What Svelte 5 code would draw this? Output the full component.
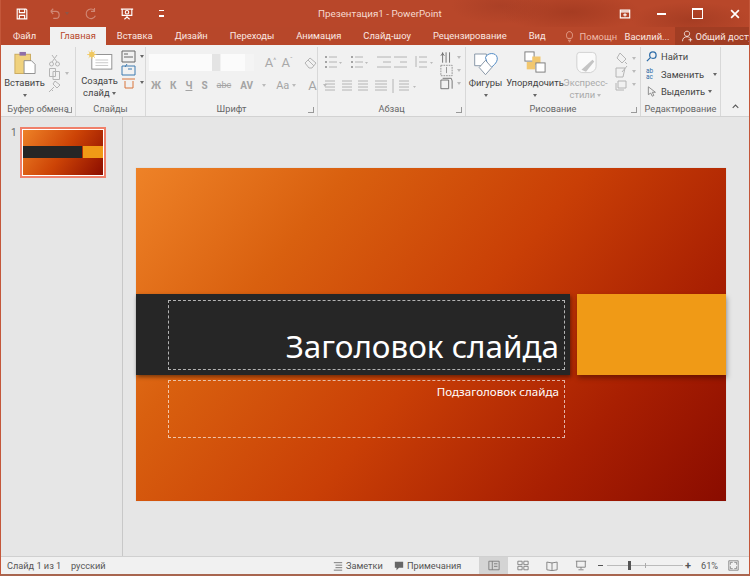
<script lang="ts">
	const tabs = ['Файл', 'Главная', 'Вставка', 'Дизайн', 'Переходы', 'Анимация', 'Слайд-шоу', 'Рецензирование', 'Вид'];
	const fontBtns = ['Ж', 'К', 'Ч', 'S', 'abc', 'AV'];
</script>

{#snippet lines(x: number, y: number, w: number, rows = 3, gap = 5)}
	{#each Array(rows) as _, i}
		<line x1={x} x2={x + w} y1={y + i * gap} y2={y + i * gap} />
	{/each}
{/snippet}

<div class="window">
	<!-- Title bar -->
	<header class="titlebar">
		<div class="qat">
			<svg class="ico16" viewBox="0 0 16 16"><path class="w" d="M2.5 2.5h10l1 1v10h-11zM5 2.5v4h6v-4M5 13.500v-4h6v4" /></svg>
			<svg class="ico16 dim" viewBox="0 0 16 16"><path class="w" d="M3 5l3-3M3 5l3 3M3 5h6c5 0 5 8 0 8H6" /></svg>
			<span class="caret dimc"></span>
			<svg class="ico16 dim redo" viewBox="0 0 16 16"><path class="w" d="M12 4a5.500 5.500 0 1 0 1 6M12 1v4H8" /></svg>
			<svg class="ico16 show" viewBox="0 0 16 16"><path class="w" d="M1 2.500h14M2.500 2.500v7h11v-7M8 9.500v2M5 14l3-2.500 3 2.500" /><circle class="w" cx="8" cy="6" r="2" /></svg>
			<span class="qat-more"></span>
		</div>
		<div class="doc-title">Презентация1 - PowerPoint</div>
		<div class="win-btns">
			<svg class="ico14" viewBox="0 0 14 14"><path class="w" d="M1.500 2.500h11v9h-11zM1.500 4.500h11M7 6v4M5 8h4" /></svg>
			<span class="min"></span>
			<span class="max"></span>
			<svg class="ico14" viewBox="0 0 14 14"><path class="x" d="M2.500 2.500l9 9M11.500 2.500l-9 9" /></svg>
		</div>
	</header>

	<!-- Tabs -->
	<nav class="tabs">
		{#each tabs as tab, i}
			<span class="tab" class:active={i === 1}>{tab}</span>
		{/each}
		<svg class="bulb" viewBox="0 0 12 16"><path d="M3.500 10.500C1 8 1.500 1.500 6 1.500s5 6.500 2.500 9zM4 13h4M5 15h2" /></svg>
		<span class="help">Помощн</span>
		<span class="user">Василий...</span>
		<span class="share">
			<svg viewBox="0 0 16 16"><path d="M8 1.500a3.500 3.500 0 1 1-.01 0zM2 15c0-4 2.500-6 6-6 1.500 0 2.500.4 3.500 1M10 13h5M12.500 10.500v5" /></svg>
			Общий доступ
		</span>
	</nav>

	<!-- Ribbon -->
	<section class="ribbon">
		<div class="group g-clip">
			<div class="g-body">
				<div class="big paste">
					<svg class="ico-paste" viewBox="0 0 24 26">
						<rect x="1" y="4" width="17" height="21" fill="#f0d27e" stroke="#c9a85a" />
						<rect x="6" y="1.500" width="7" height="4" fill="#8f6fa8" />
						<path d="M11 11h8l4 4v10H11z" fill="#fff" stroke="#8a8a8a" />
					</svg>
					<span class="lbl">Вставить</span>
					<span class="caret"></span>
				</div>
				<div class="col small-col">
					<svg class="ico13 off" viewBox="0 0 13 13"><path d="M4 1l5 7M9 1L4 8" /><circle cx="3.500" cy="10" r="2" /><circle cx="9.500" cy="10" r="2" /></svg>
					<span class="row-ico">
						<svg class="ico13 off" viewBox="0 0 13 13"><path d="M1.500 1.500h6v8h-6zM5 4.500h6.500v8H5z" /></svg>
						<span class="caret off-c"></span>
					</span>
					<svg class="ico13 off" viewBox="0 0 13 13"><path d="M7 1l5 4-3 3-4-4zM6 7l-5 5M3 9l2 2" /></svg>
				</div>
			</div>
			<div class="g-label">Буфер обмена <i class="launch"></i></div>
		</div>

		<div class="group g-slides">
			<div class="g-body">
				<div class="big new-slide">
					<svg class="ico-new" viewBox="0 0 28 22">
						<rect x="5" y="5" width="22" height="16" fill="#fff" stroke="#8a8a8a" />
						<path d="M9 11h14M9 14h14M9 17h14" stroke="#c4c4c4" />
						<circle cx="5" cy="5" r="3" fill="#f0c860" />
						<path d="M5 0v10M0 5h10M1.500 1.500l7 7M8.500 1.500l-7 7" stroke="#f0c860" />
					</svg>
					<span class="lbl">Создать</span>
					<span class="lbl">слайд <i class="caret"></i></span>
				</div>
				<div class="col slide-col">
					<span class="row-ico">
						<svg class="ico15" viewBox="0 0 15 13"><path d="M1 1h13v11H1zM3 4h4M3 7h9" /></svg>
						<span class="caret"></span>
					</span>
					<svg class="ico15 blue" viewBox="0 0 15 13"><path d="M1 3h13v9H1zM6 1l-2 3M7 6h4" /></svg>
					<span class="row-ico">
						<svg class="ico15 orange" viewBox="0 0 15 13"><path d="M1 3h13M4 5v7h8V5" /></svg>
						<span class="caret"></span>
					</span>
				</div>
			</div>
			<div class="g-label">Слайды</div>
		</div>

		<div class="group g-font">
			<div class="g-body stack">
				<div class="f-row">
					<span class="f-input wide"></span><span class="f-drop"></span>
					<span class="f-input narrow"></span><span class="f-drop plain"></span>
					<span class="a-btn big-a">A<sup>^</sup></span>
					<span class="a-btn">A<sup>ˇ</sup></span>
					<svg class="ico13 off clear" viewBox="0 0 13 13"><path d="M1 7l5-5 6 5-4 5H5zM4 4l6 6" /></svg>
				</div>
				<div class="f-row tools">
					{#each fontBtns as b}
						<span class="f-btn" class:under={b === 'Ч'} class:strike={b === 'abc'}>{b}</span>
					{/each}
					<i class="caret off-c"></i>
					<span class="f-btn aa">Aa</span><i class="caret off-c"></i>
					<span class="f-sep"></span>
					<span class="f-btn color">A</span><i class="caret off-c"></i>
				</div>
			</div>
			<div class="g-label">Шрифт <i class="launch"></i></div>
		</div>

		<div class="group g-para">
			<div class="g-body para-body">
				<div class="para-left">
					<svg class="ico-list" viewBox="0 0 112 14">
						<g class="gl">
							{@render lines(4, 2, 8)}
							{@render lines(30, 2, 8)}
							<path d="M52 2h14M58 7h8M52 12h14M69 2h13M75 7h7M69 12h13M94 2h8M94 7h8M94 12h8M91 1v11" />
						</g>
						<g class="dots"><path d="M0 2h2M0 7h2M0 12h2M26 2h2M26 7h2M26 12h2" /></g>
						<path class="mini" d="M14 7h3l-1.500 2zM40 7h3l-1.500 2zM105 7h3l-1.500 2z" />
					</svg>
					<svg class="ico-list" viewBox="0 0 112 14">
						<g class="gl">
							{@render lines(0, 2, 10, 4, 3)}
							{@render lines(17, 2, 10, 4, 3)}
							{@render lines(33, 2, 10, 4, 3)}
							{@render lines(50, 2, 12, 4, 3)}
							{@render lines(74, 2, 10, 4, 3)}
							<path d="M68 0v14" />
						</g>
						<path class="mini" d="M88 7h3l-1.500 2z" />
					</svg>
				</div>
				<div class="col para-right">
					<span class="row-ico"><svg class="ico13" viewBox="0 0 15 14"><path d="M3 1v12M7 1v12M11 1v12M1 5l2-3 2 3" /></svg><i class="caret off-c"></i></span>
					<span class="row-ico"><svg class="ico13 bluebox" viewBox="0 0 15 14"><path stroke-dasharray="2 1" d="M1 1h13v12H1z" /><path d="M7.500 3v7" /></svg><i class="caret off-c"></i></span>
					<span class="row-ico"><svg class="ico13" viewBox="0 0 15 14"><path d="M1 3h9v10H1zM3 1h10l1 3v9" /></svg><i class="caret off-c"></i></span>
				</div>
			</div>
			<div class="g-label">Абзац <i class="launch"></i></div>
		</div>

		<div class="group g-draw">
			<div class="g-body">
				<div class="big shapes">
					<svg class="ico-shapes" viewBox="0 0 30 28">
						<path d="M3 4h13v13H3z" fill="#fff" stroke="#7f8fa0" />
						<path d="M15 8c2-6 12-6 13 0 1 6-6 10-9 13z" fill="#fff" stroke="#3f7fbf" />
						<path d="M15 11l7 8-7 8-7-8z" fill="#fff" stroke="#7f8fa0" />
					</svg>
					<span class="lbl">Фигуры</span>
					<span class="caret"></span>
				</div>
				<div class="big arrange">
					<svg class="ico-arr" viewBox="0 0 24 24">
						<rect x="1" y="1" width="10" height="10" fill="#fff" stroke="#777" />
						<rect x="9" y="6" width="9" height="9" fill="#f2c76e" />
						<rect x="3" y="12" width="9" height="8" fill="#f2c76e" />
						<rect x="13" y="13" width="10" height="10" fill="#fff" stroke="#777" />
					</svg>
					<span class="lbl">Упорядочить</span>
					<span class="caret"></span>
				</div>
				<div class="big styles">
					<svg class="ico-sty" viewBox="0 0 24 26"><path d="M5 2h14q4 0 4 4v11q0 5-6 7H7q-5-2-5-7V5q0-3 3-3z" fill="#fafafa" stroke="#cfcfcf" /><path d="M7 21l12-11 2 2-9 11z" fill="#c4c4c4" /></svg>
					<span class="lbl off-t">Экспресс-</span>
					<span class="lbl off-t">стили <i class="caret off-c"></i></span>
				</div>
				<div class="col draw-col">
					<span class="row-ico"><svg class="ico13 off" viewBox="0 0 13 13"><path d="M5 1l6 6-4 4-5-5zM10 10l2 2" /></svg><i class="caret off-c"></i></span>
					<span class="row-ico"><svg class="ico13 off" viewBox="0 0 13 13"><path d="M1 3h9L8 12H1zM12 1L7 7" /></svg><i class="caret off-c"></i></span>
					<span class="row-ico"><svg class="ico13 off" viewBox="0 0 13 13"><path d="M3 3h8v7H3z" /><path d="M1 5v7h8" /></svg><i class="caret off-c"></i></span>
				</div>
			</div>
			<div class="g-label">Рисование <i class="launch"></i></div>
		</div>

		<div class="group g-edit">
			<div class="g-body edit-body">
				<div class="ed-row"><span class="ed-ico"><svg class="ico12" viewBox="0 0 12 12"><circle cx="7.500" cy="4.500" r="3.500" /><path d="M5 7l-4 4" /></svg></span>Найти</div>
				<div class="ed-row"><span class="ed-ico abc">ab<br />ac</span>Заменить<i class="caret gap-c"></i></div>
				<div class="ed-row"><span class="ed-ico"><svg class="ico12 ptr" viewBox="0 0 12 14"><path d="M2 1v10l3-2 2 4 2-1-2-4h4z" /></svg></span>Выделить<i class="caret"></i></div>
			</div>
			<div class="g-label">Редактирование</div>
		</div>

		<div class="collapse"><svg viewBox="0 0 10 6"><path d="M1 5l4-4 4 4" /></svg></div>
	</section>

	<!-- Main area -->
	<main class="main">
		<aside class="thumbs">
			<span class="thumb-num">1</span>
			<div class="thumb">
				<div class="thumb-slide">
					<div class="t-band"><span class="t-dark"></span><span class="t-orange"></span></div>
				</div>
			</div>
		</aside>
		<div class="canvas">
			<div class="slide">
				<div class="band">
					<div class="band-dark">
						<div class="ph title-ph">Заголовок слайда</div>
					</div>
					<div class="band-orange"></div>
				</div>
				<div class="ph sub-ph">Подзаголовок слайда</div>
			</div>
		</div>
	</main>

	<!-- Status bar -->
	<footer class="status">
		<span class="st-left">Слайд 1 из 1</span>
		<span class="st-lang">русский</span>
		<span class="st-btn notes">
			<svg viewBox="0 0 12 12"><path d="M1 2h10M3 5h8M3 8h8M1 11h10" /></svg>Заметки
		</span>
		<span class="st-btn comments">
			<svg viewBox="0 0 12 12"><path class="fill" d="M1 1h10v7H6l-3 3V8H1z" /></svg>Примечания
		</span>
		<span class="view current"><svg viewBox="0 0 14 12"><path d="M1 1h12v10H1zM5 1v10M7 4h4M7 7h4" /></svg></span>
		<span class="view"><svg viewBox="0 0 14 12"><path d="M1 1h5v4H1zM8 1h5v4H8zM1 7h5v4H1zM8 7h5v4H8z" /></svg></span>
		<span class="view"><svg viewBox="0 0 14 12"><path d="M1 2l6 1 6-1v9l-6 1-6-1zM7 3v9" /></svg></span>
		<span class="view"><svg viewBox="0 0 14 12"><path d="M1 1h12M2 1v7h10V1M7 8v2M4 11h6" /></svg></span>
		<span class="zoom-minus"></span>
		<span class="slider"><i class="thumbk"></i><i class="tick"></i></span>
		<span class="zoom-plus">+</span>
		<span class="pct">61%</span>
		<svg class="fit" viewBox="0 0 14 14"><path d="M1 1h12v12H1zM3 6V3h3M8 3h3v3M11 8v3H8M6 11H3V8" /></svg>
	</footer>
</div>

<style>
	:global(body) {
		margin: 0;
		background: #e6e6e6;
	}

	.window {
		width: 750px;
		height: 576px;
		box-sizing: border-box;
		display: flex;
		flex-direction: column;
		overflow: hidden;
		border-left: 1px solid #c4573a;
		border-right: 1px solid #c4573a;
		border-bottom: 2px solid #a8654f;
		font-family: Roboto, 'Noto Sans', sans-serif;
		color: #444;
	}

	svg {
		display: block;
		fill: none;
		stroke: #666;
		stroke-width: 1;
	}

	.titlebar {
		height: 27px;
		flex: none;
		display: flex;
		align-items: center;
		color: #fff;
		background:
			radial-gradient(ellipse 70px 20px at 570px 12px, #a63c22 0%, rgba(166, 60, 34, 0) 100%),
			radial-gradient(ellipse 50px 18px at 500px 6px, #ab4026 0%, rgba(171, 64, 38, 0) 100%),
			radial-gradient(ellipse 60px 18px at 690px 20px, #a63d23 0%, rgba(166, 61, 35, 0) 100%),
			#b8472a;
	}

	.qat {
		width: 290px;
		flex: none;
		display: flex;
		align-items: center;
		padding-left: 14px;
		box-sizing: border-box;
	}

	.ico16 { width: 14px; height: 14px; flex: none; }
	.ico14 { width: 12px; height: 12px; flex: none; }
	.w { stroke: #fff; stroke-width: 1.300; fill: none; }
	.x { stroke: #fff; stroke-width: 2; }
	.dim { opacity: 0.35; margin-left: 19px; }
	.redo { margin-left: 15px; }
	.show { margin-left: 22px; }
	.dimc { border-top-color: #e8b5a6; opacity: 0.5; margin-left: 3px; }

	.qat-more {
		width: 5px;
		height: 4px;
		margin-left: 25px;
		border-top: 1px solid #fff;
		border-bottom: 2px solid #fff;
	}

	.doc-title {
		margin-left: 27px;
		font-size: 9.800px;
		color: #f6d9cf;
		white-space: nowrap;
	}

	.win-btns {
		margin-left: auto;
		display: flex;
		align-items: center;
		gap: 26px;
		padding-right: 8px;
	}

	.min { width: 9px; height: 2px; background: #fff; }
	.max { width: 9px; height: 8px; border: 1px solid #fff; border-top-width: 2px; }

	.tabs {
		height: 18px;
		flex: none;
		display: flex;
		align-items: center;
		background: #b7472a;
		color: #fbe8e2;
		font-size: 9.400px;
	}

	.tab {
		padding: 0 11px;
		height: 18px;
		line-height: 18px;
		white-space: nowrap;
	}

	.tab:first-child { padding: 0 14px 0 12px; }

	.tab.active {
		background: #f1f1f1;
		color: #b7472a;
		padding: 0 10px;
	}

	.bulb { width: 9px; height: 13px; margin-left: 8px; stroke: #f0b9a8; flex: none; }
	.help { color: #eeb9a8; margin-left: 6px; width: 45px; flex: none; }
	.user { white-space: nowrap; }

	.share {
		margin-left: 5px;
		height: 18px;
		padding-left: 6px;
		display: flex;
		align-items: center;
		gap: 3px;
		background: #a13d23;
		flex: 1;
		white-space: nowrap;
	}

	.share svg { width: 12px; height: 12px; stroke: #fff; }

	.ribbon {
		height: 72px;
		flex: none;
		display: flex;
		background: #f1f1f1;
		border-bottom: 1px solid #d2d2d2;
		box-sizing: border-box;
		position: relative;
		font-size: 9.400px;
	}

	.group {
		display: flex;
		flex-direction: column;
		flex: none;
		box-sizing: border-box;
		border-right: 1px solid #d8d8d8;
		margin: 2px 0 0;
	}

	.g-clip { width: 75px; }
	.g-slides { width: 70px; }
	.g-font { width: 172px; }
	.g-para { width: 148px; }
	.g-draw { width: 175px; }
	.g-edit { width: 80px; }

	.g-body {
		flex: 1;
		display: flex;
		min-height: 0;
	}

	.g-label {
		height: 14px;
		line-height: 14px;
		text-align: center;
		font-size: 9.200px;
		color: #666;
		position: relative;
		white-space: nowrap;
	}

	.launch {
		position: absolute;
		right: 3px;
		bottom: 3px;
		width: 5px;
		height: 5px;
		border-right: 1px solid #999;
		border-bottom: 1px solid #999;
	}

	.big {
		display: flex;
		flex-direction: column;
		align-items: center;
		line-height: 12px;
		white-space: nowrap;
	}

	.lbl { color: #444; }
	.off-t { color: #aaa; }

	.caret {
		display: inline-block;
		width: 0;
		height: 0;
		border-left: 2.500px solid transparent;
		border-right: 2.500px solid transparent;
		border-top: 3px solid #666;
		vertical-align: middle;
		flex: none;
	}

	.off-c { border-top-color: #bbb; }

	.col {
		display: flex;
		flex-direction: column;
		justify-content: space-between;
	}

	.row-ico {
		display: flex;
		align-items: center;
		gap: 4px;
	}

	.ico12 { width: 11px; height: 11px; stroke: #2f6da8; stroke-width: 1.400; flex: none; }
	.ico13 { width: 13px; height: 13px; flex: none; }
	.ico15 { width: 15px; height: 13px; flex: none; }
	.off { stroke: #b4b4b4; }
	.blue { stroke: #3d7ab0; }
	.orange { stroke: #d9753a; }
	.bluebox { stroke: #8a8a8a; }

	.paste { width: 47px; padding-top: 3px; }
	.ico-paste { width: 22px; height: 25px; margin-bottom: 2px; stroke: none; }
	.paste .caret { margin-top: 5px; }
	.small-col { padding: 7px 0 14px; }

	.new-slide { width: 41px; padding: 3px 0 0 3px; }
	.ico-new { width: 26px; height: 20px; margin-bottom: 5px; stroke: none; }
	.slide-col { margin-left: 1px; padding: 3px 0 13px; }

	.stack {
		flex-direction: column;
		padding: 6px 0 0 3px;
		gap: 7px;
	}

	.f-row {
		display: flex;
		align-items: center;
		height: 18px;
	}

	.f-input { height: 17px; background: #fbfbfb; display: block; }
	.wide { width: 64px; }
	.narrow { width: 24px; margin-left: 1px; }

	.f-drop {
		width: 9px;
		height: 17px;
		background: #e4e4e4;
	}

	.f-drop.plain { background: #f4f4f4; }

	.a-btn {
		font-size: 13px;
		color: #a8a8a8;
		width: 17px;
		white-space: nowrap;
		margin-left: 0;
	}

	.a-btn sup { font-size: 7px; vertical-align: 4px; line-height: 0; }
	.big-a { margin-left: 11px; }
	.clear { margin-left: 6px; }

	.tools { height: 14px; padding-left: 2px; }

	.f-btn {
		font-size: 10px;
		font-weight: 700;
		color: #a4a4a4;
		margin-right: 9px;
	}

	.under { text-decoration: underline; }
	.strike { font-weight: 400; text-decoration: line-through; font-size: 9px; }
	.f-btn.aa { font-size: 11px; font-weight: 400; margin: 0 3px 0 10px; }
	.f-sep { width: 1px; height: 14px; background: #d8d8d8; margin: 0 5px; }
	.f-btn.color { font-size: 13px; font-weight: 400; margin: 0 6px 0 2px; }

	.para-body { gap: 3px; }

	.para-left {
		display: flex;
		flex-direction: column;
		padding: 8px 0 0 7px;
		gap: 10px;
	}

	.ico-list { width: 112px; height: 14px; }
	.gl { stroke: #b4b4b4; }
	.dots { stroke: #8a8a8a; stroke-width: 1.500; }
	.mini { fill: #bbb; stroke: none; }
	.para-right { padding: 4px 0 14px; }

	.shapes { width: 39px; padding-top: 2px; }
	.ico-shapes { width: 27px; height: 28px; stroke: none; margin-bottom: 0; }
	.shapes .caret, .arrange .caret { margin-top: 5px; }
	.arrange { width: 60px; padding-top: 3px; }
	.ico-arr { width: 22px; height: 24px; stroke: none; margin-bottom: 3px; }
	.styles { width: 41px; padding-top: 3px; }
	.ico-sty { width: 22px; height: 25px; stroke: none; margin-bottom: 2px; }
	.draw-col { padding: 5px 0 13px 9px; }

	.edit-body {
		flex-direction: column;
		padding: 1px 0 0 5px;
	}

	.ed-row {
		display: flex;
		align-items: center;
		height: 17.500px;
		white-space: nowrap;
	}

	.ed-ico { width: 15px; flex: none; }

	.abc {
		font-size: 6.500px;
		line-height: 6px;
		color: #2f6da8;
	}

	.ptr { stroke: #777; stroke-width: 1; }
	.gap-c { margin-left: 9px; }
	.ed-row .caret { margin-left: 3px; }
	.ed-row .gap-c { margin-left: 9px; }

	.collapse {
		flex: 1;
		display: flex;
		align-items: flex-end;
		justify-content: center;
		padding-bottom: 7px;
		box-sizing: border-box;
	}

	.collapse svg { width: 7px; height: 5px; stroke: #555; stroke-width: 1.500; }

	.main {
		flex: 1;
		min-height: 0;
		display: flex;
		background: #e6e6e6;
		border-bottom: 1px solid #d0d0d0;
	}

	.thumbs {
		width: 122px;
		flex: none;
		box-sizing: border-box;
		border-right: 1px solid #c8c8c8;
		display: flex;
		align-items: flex-start;
		padding: 10px 0 0 10px;
		gap: 3px;
	}

	.thumb-num { font-size: 10px; color: #666; line-height: 11px; }

	.thumb {
		width: 86px;
		height: 51px;
		box-sizing: border-box;
		border: 2px solid #f0806a;
		background: #fff;
		padding: 1px;
	}

	.thumb-slide {
		height: 100%;
		background: linear-gradient(125deg, #ee8227 0%, #cd4406 50%, #8c0d00 100%);
		padding-top: 16px;
		box-sizing: border-box;
	}

	.t-band { display: flex; height: 12px; }
	.t-dark { width: 59px; background: #262626; }
	.t-orange { flex: 1; margin-left: 1px; background: #f09a16; }

	.canvas {
		flex: 1;
		box-sizing: border-box;
		padding: 51px 0 0 13px;
	}

	.slide {
		width: 590px;
		height: 333px;
		background: linear-gradient(130deg, #ee8227 0%, #d9600f 25%, #c93f06 52%, #a81f02 78%, #8a0c00 100%);
		box-shadow: 0 0 1px rgba(0, 0, 0, 0.15);
		padding-top: 126px;
		box-sizing: border-box;
	}

	.band {
		height: 81px;
		display: flex;
	}

	.band-dark {
		width: 434px;
		background: #262626;
		box-shadow: 1px 2px 4px rgba(0, 0, 0, 0.45);
		padding: 6px 5px 5px 32px;
		box-sizing: border-box;
	}

	.band-orange {
		width: 149px;
		margin-left: 7px;
		background: #f09a16;
		box-shadow: 1px 3px 5px rgba(0, 0, 0, 0.35);
	}

	.ph {
		box-sizing: border-box;
		border: 1px dashed rgba(255, 255, 255, 0.65);
		color: #fff;
		text-align: right;
		font-family: 'Noto Sans', sans-serif;
	}

	.title-ph {
		height: 70px;
		font-size: 31.400px;
		line-height: 1;
		padding: 29px 5px 0 0;
		white-space: nowrap;
	}

	.sub-ph {
		width: 397px;
		height: 58px;
		margin: 5px 0 0 32px;
		font-size: 11.600px;
		padding: 3px 5px 0 0;
	}

	.status {
		height: 17px;
		flex: none;
		display: flex;
		align-items: center;
		background: #f1f1f1;
		font-size: 9.200px;
		color: #555;
	}

	.st-left { padding-left: 6px; width: 64px; white-space: nowrap; }
	.st-lang { width: 262px; }

	.st-btn {
		display: flex;
		align-items: center;
		gap: 3px;
		white-space: nowrap;
	}

	.st-btn svg { width: 10px; height: 10px; }
	.notes { width: 61px; }
	.comments { width: 85px; }
	.fill { fill: #666; stroke: none; }

	.view {
		width: 29px;
		height: 17px;
		display: flex;
		align-items: center;
		justify-content: center;
		box-sizing: border-box;
	}

	.view svg { width: 12px; height: 11px; stroke: #777; }
	.current { background: #d4d4d4; }

	.zoom-minus { width: 5px; height: 1.500px; background: #555; margin-left: 3px; }

	.slider {
		width: 76px;
		height: 1px;
		background: #bbb;
		margin: 0 2px 0 4px;
		display: flex;
		align-items: center;
	}

	.thumbk { width: 3px; height: 9px; background: #555; margin-left: 21px; }
	.tick { width: 1px; height: 5px; background: #aaa; margin-left: 14px; }

	.zoom-plus { font-size: 11px; font-weight: 700; color: #555; }
	.pct { margin-left: 10px; width: 27px; }
	.fit { width: 11px; height: 11px; stroke: #777; }
</style>
